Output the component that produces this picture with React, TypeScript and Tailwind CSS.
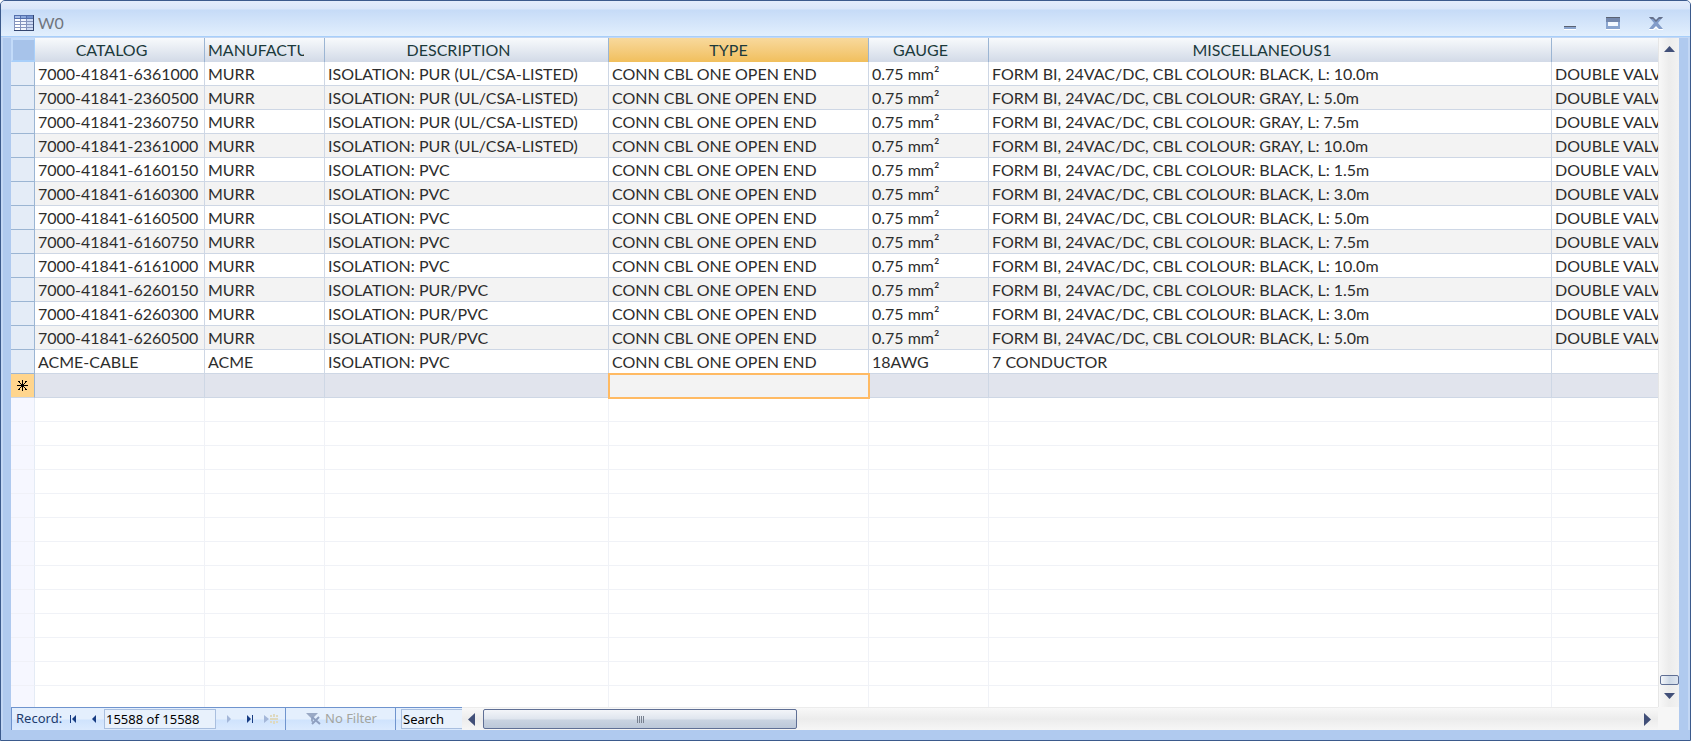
import React from "react";

type Row = [string, string, string, string, string, string, string];

const form = "FORM BI, 24VAC/DC, CBL COLOUR: ";
const conn = "CONN CBL ONE OPEN END";

const murr = (catalog: string, isolation: string, colour: string, length: string): Row => [
  "7000-41841-" + catalog,
  "MURR",
  "ISOLATION: " + isolation,
  conn,
  "0.75 mm²",
  form + colour + ", L: " + length,
  "DOUBLE VALV",
];

const rows: Row[] = [
  murr("6361000", "PUR (UL/CSA-LISTED)", "BLACK", "10.0m"),
  murr("2360500", "PUR (UL/CSA-LISTED)", "GRAY", "5.0m"),
  murr("2360750", "PUR (UL/CSA-LISTED)", "GRAY", "7.5m"),
  murr("2361000", "PUR (UL/CSA-LISTED)", "GRAY", "10.0m"),
  murr("6160150", "PVC", "BLACK", "1.5m"),
  murr("6160300", "PVC", "BLACK", "3.0m"),
  murr("6160500", "PVC", "BLACK", "5.0m"),
  murr("6160750", "PVC", "BLACK", "7.5m"),
  murr("6161000", "PVC", "BLACK", "10.0m"),
  murr("6260150", "PUR/PVC", "BLACK", "1.5m"),
  murr("6260300", "PUR/PVC", "BLACK", "3.0m"),
  murr("6260500", "PUR/PVC", "BLACK", "5.0m"),
  ["ACME-CABLE", "ACME", "ISOLATION: PVC", conn, "18AWG", "7 CONDUCTOR", ""],
];

const headers = ["CATALOG", "MANUFACTU", "DESCRIPTION", "TYPE", "GAUGE", "MISCELLANEOUS1", ""];
const blanks = Array.from({ length: 13 }, (_, i) => i);

function TitleBar() {
  return (
    <header className="flex h-9 shrink-0 items-center border-b border-[#a8cffa] bg-[linear-gradient(#e3ecfb_0px,#d9e6f9_8px,#c6dbf7_9px,#e2effd_35px)] pt-2 pr-[27px] pl-[13px]">
      <svg width="20" height="16" viewBox="0 0 20 16" shapeRendering="crispEdges" aria-hidden="true">
        <rect width="20" height="16" fill="#8594bd" />
        <rect width="20" height="4" fill="#5470ad" />
        <rect x="1" y="1" width="5" height="2" fill="#a9bfe8" />
        <rect x="7" y="1" width="5" height="2" fill="#8ba8dc" />
        <rect x="13" y="1" width="6" height="2" fill="#7291cd" />
        {[4, 7, 10, 13].map((y) => (
          <g key={y}>
            <rect x="1" y={y} width="5" height="2" fill="#ffffff" />
            <rect x="7" y={y} width="5" height="2" fill="#f1f5fd" />
            <rect x="13" y={y} width="6" height="2" fill="#cddaf3" />
          </g>
        ))}
        <path d="M19 0h1v16H0v-1h19z" fill="#34466f" />
      </svg>
      <h1 className="ml-1 text-base text-[#70757d]">W0</h1>
      <div className="ml-auto flex items-center gap-[29px]">
        <button aria-label="Minimize" className="h-4 w-3.5">
          <svg width="14" height="16" className="block" shapeRendering="crispEdges">
            <path d="M1 11h12v1H1z" fill="#5a6272" />
            <path d="M1 12h12v2H1z" fill="#8aa5cf" />
            <path d="M1 14h12v1H1z" fill="#fff" />
          </svg>
        </button>
        <button aria-label="Maximize" className="h-4 w-3.5">
          <svg width="14" height="16" className="block" shapeRendering="crispEdges">
            <path d="M0 2h14v12H0z" fill="#8aa5cf" />
            <path d="M0 2h14v5H0z" fill="#7488ad" />
            <path d="M0 2h14v1H0z" fill="#5a6272" />
            <path d="M2 7h10v4H2z" fill="#f4f9ff" />
            <path d="M0 14h14v1H0z" fill="#fff" />
          </svg>
        </button>
        <button aria-label="Close" className="h-4 w-3.5">
          <svg width="14" height="16" className="block">
            <path d="M0 14h4l3-3 3 3h4v1H9l-2-2-2 2H0z" fill="#fff" />
            <path d="M0 2h4l3 3 3-3h4L9 8l5 6h-4l-3-3-3 3H0l5-6z" fill="#829cc9" />
            <path d="M0 2h4l3 3 3-3h4l-2 2h-2L7 7 4 4H2z" fill="#66718a" />
          </svg>
        </button>
      </div>
    </header>
  );
}

function Grid() {
  return (
    <div className="min-w-0 flex-1 overflow-hidden bg-white">
      <table className="w-full table-fixed border-separate border-spacing-0 text-base leading-[23px] whitespace-nowrap text-[#2d2d2d]">
        <colgroup>
          <col className="w-6" />
          <col className="w-[170px]" />
          <col className="w-[120px]" />
          <col className="w-[284px]" />
          <col className="w-[260px]" />
          <col className="w-[120px]" />
          <col className="w-[563px]" />
          <col />
        </colgroup>
        <thead>
          <tr className="h-6">
            <th aria-label="Select all" className="border-2 border-r border-[#c3dbf9] border-r-[#a8cffa] border-b-[#a8cffa] bg-[#a7c3ea] p-0" />
            {headers.map((h, i) => (
              <th
                key={i}
                scope="col"
                className={
                  "overflow-hidden border-r border-r-[#9bb5d3] bg-linear-to-b p-0 align-top font-normal text-[#1c3a3c] last:border-r-0 " +
                  (i === 3 ? "from-[#f8d99c] to-[#f1bf5c] " : "from-[#f8fafc] to-[#d2dae7] ") +
                  (i === 1 ? "pr-5 pl-[3px] text-left" : i === 3 ? "pr-5" : "pr-4")
                }
              >
                <div className="h-[23px] overflow-hidden">{h}</div>
              </th>
            ))}
          </tr>
        </thead>
        <tbody>
          {rows.map((r, n) => (
            <tr key={n} className="h-6 even:bg-[#f3f3f3]">
              <td className="border-r border-b border-[#9bb5d3] bg-[#e4ecf7] p-0" />
              {r.map((c, i) => (
                <td key={i} className="overflow-hidden border-r border-b border-[#ced7e5] p-0 pl-[3px] last:border-r-0">
                  {c}
                </td>
              ))}
            </tr>
          ))}
          <tr className="h-6 bg-[#e1e4ed]">
            <td className="border-r border-b border-r-[#9bb5d3] border-b-[#ced7e5] bg-[#ffd58d] p-0">
              <svg className="mx-auto" width="11" height="11" shapeRendering="crispEdges" aria-label="New record">
                <path d="M5 0h1v11H5zM0 5h11v1H0zM4 4h3v3H4zM1 1h2v1H1zM2 2h1v1H2zM3 3h1v1H3zM8 1h2v1H8zM8 2h1v1H8zM7 3h1v1H7zM3 7h1v1H3zM2 8h1v1H2zM1 9h2v1H1zM7 7h1v1H7zM8 8h1v1H8zM8 9h2v1H8z" fill="#000" />
              </svg>
            </td>
            {headers.map((_, i) =>
              i === 3 ? (
                <td key={i} className="relative bg-[#f3f3f3] p-0">
                  <span className="absolute -top-px right-[-1px] bottom-[-1px] -left-px border-2 border-[#ffba63]" />
                </td>
              ) : (
                <td key={i} className="border-r border-b border-[#ced7e5] p-0 last:border-r-0" />
              ),
            )}
          </tr>
          {blanks.map((n) => (
            <tr key={n} className="h-6">
              <td className="border-r border-b border-r-[#e4ebf5] border-b-[#f0f1f8] bg-[#f6f7ff] p-0" />
              {headers.map((_, i) => (
                <td key={i} className="border-r border-b border-[#f0f2f7] p-0 last:border-r-0" />
              ))}
            </tr>
          ))}
        </tbody>
      </table>
    </div>
  );
}

function VerticalScroll() {
  return (
    <div className="flex w-[21px] shrink-0 flex-col items-center border-l border-[#e6e6e6] bg-linear-to-r from-[#f8f8f8] via-[#ececec] to-[#f2f2f2]">
      <button aria-label="Scroll up" className="mt-2 h-[6px]">
        <svg width="11" height="6" className="block">
          <path d="M5.500 0L11 6H0z" fill="#414f78" />
        </svg>
      </button>
      <div className="mt-auto h-2.5 w-[19px] rounded-[2px] border border-[#5f6f95] bg-linear-to-r from-[#f5f7fa] via-[#cdd8e6] to-[#dfe6f0]" />
      <button aria-label="Scroll down" className="mt-2 mb-2 h-[6px]">
        <svg width="11" height="6" className="block">
          <path d="M0 0h11L5.500 6z" fill="#414f78" />
        </svg>
      </button>
    </div>
  );
}

function RecordBar() {
  return (
    <footer className="flex h-[23px] shrink-0 text-[13px] [font-family:'Noto_Sans',sans-serif]">
      <nav
        aria-label="Records"
        className="flex w-[451px] shrink-0 items-stretch border-t border-l border-[#6f94ce] bg-[linear-gradient(#e4effd_0px,#e4effd_11px,#cfe3fd_12px,#dbeafe_22px)] text-[#1e3c6e]"
      >
        <label htmlFor="record" className="w-[52px] self-center pl-1">
          Record:
        </label>
        <button aria-label="First record" className="w-5">
          <svg width="8" height="10" className="ml-1.5"><path d="M0 1h1v8H0zM6 1v8L2 5z" fill="#173c83" /></svg>
        </button>
        <button aria-label="Previous record" className="w-5">
          <svg width="5" height="10" className="ml-2"><path d="M4 1v8L0 5z" fill="#173c83" /></svg>
        </button>
        <input
          id="record"
          defaultValue="15588 of 15588"
          className="my-px h-5 w-28 border border-[#a9bfdf] bg-[#e8f1fc] px-px text-black"
        />
        <button aria-label="Next record" disabled className="w-5">
          <svg width="5" height="10" className="ml-[11px]"><path d="M0 1v8l4-4z" fill="#a4b7d9" /></svg>
        </button>
        <button aria-label="Last record" className="w-5">
          <svg width="8" height="10" className="ml-[11px]"><path d="M0 1v8l4-4zM5 1h1v8H5z" fill="#173c83" /></svg>
        </button>
        <button aria-label="New record" disabled className="w-[29px]">
          <svg width="15" height="10" className="ml-2">
            <path d="M0 1v8l5-4z" fill="#a4b7d9" />
            <path d="M6 1h2v2H6zM9 0h2v3H9zM12 1h2v2h-2zM6 4h8v2H6zM6 7h2v2H6zM9 7h2v3H9zM12 7h2v2h-2z" fill="#ded9c0" />
          </svg>
        </button>
        <button disabled className="flex w-[111px] items-center border-x border-[#6f94ce] pl-5 text-[#a3a59f]">
          <svg width="15" height="14" className="mr-1">
            <path d="M0 1h12L7 6v5l-2-2V6z" fill="#9aa9c5" />
            <path d="M6 5l8 7M13 5l-7 7" stroke="#8e9fc0" strokeWidth="2" />
          </svg>
          No Filter
        </button>
        <input
          aria-label="Search"
          defaultValue="Search"
          className="my-px ml-[5px] h-5 min-w-0 flex-1 border border-r-0 border-[#a9bfdf] bg-[#e8f1fc] px-px text-black"
        />
      </nav>
      <div className="flex min-w-0 flex-1 items-center border-t border-[#ececec] bg-linear-to-b from-[#f8f8f8] via-[#ececec] to-[#f6f6f6]">
        <button aria-label="Scroll left" className="w-[21px] pl-1.5">
          <svg width="7" height="13" className="block"><path d="M7 0v13L0 6.500z" fill="#414f78" /></svg>
        </button>
        <div className="flex h-5 w-[314px] items-center justify-center gap-px rounded-[2px] border border-[#5f6f95] bg-[linear-gradient(#f3f5f9_0px,#dfe5ee_9px,#c9d3e1_10px,#bcc8d9_18px)]">
          <i className="h-[7px] w-px bg-[#77808f]" />
          <i className="h-[7px] w-px bg-[#77808f]" />
          <i className="h-[7px] w-px bg-[#77808f]" />
          <i className="h-[7px] w-px bg-[#77808f]" />
        </div>
        <button aria-label="Scroll right" className="ml-auto w-3.5">
          <svg width="7" height="13" className="block"><path d="M0 0v13l7-6.500z" fill="#414f78" /></svg>
        </button>
      </div>
      <div className="w-[21px] shrink-0 bg-[#f6f6f6]" />
    </footer>
  );
}

export default function App() {
  return (
    <div className="h-screen bg-white [font-family:Lato,sans-serif]">
      <div className="flex h-full flex-col overflow-hidden rounded-t-[5px] border border-[#3b5a8c] bg-[#b0caef]">
        <TitleBar />
        <main className="mb-[10px] flex min-h-0 flex-1 flex-col border-x-2 border-t border-[#c3d7f4] pr-[9px] pl-2">
          <div className="flex min-h-0 flex-1">
            <Grid />
            <VerticalScroll />
          </div>
          <RecordBar />
        </main>
      </div>
    </div>
  );
}
